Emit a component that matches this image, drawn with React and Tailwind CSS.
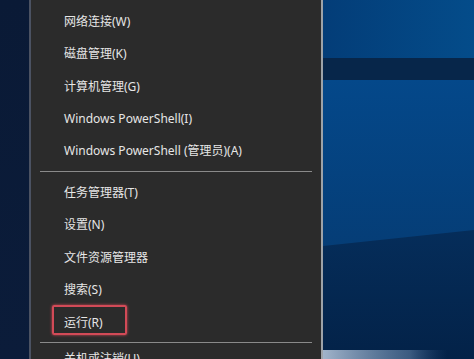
const groupA = [
  '网络连接(W)',
  '磁盘管理(K)',
  '计算机管理(G)',
  'Windows PowerShell(I)',
  'Windows PowerShell (管理员)(A)',
];

const groupB = ['任务管理器(T)', '设置(N)', '文件资源管理器', '搜索(S)'];

const Wallpaper = () => (
  <svg className="h-full w-full" viewBox="0 0 152 359" preserveAspectRatio="none">
    <defs>
      <linearGradient id="top" x1="0" y1="0" x2="1" y2="0">
        <stop offset="0" stopColor="#033d78" />
        <stop offset="1" stopColor="#044c8a" />
      </linearGradient>
      <linearGradient id="mid" x1="0" y1="0" x2="0" y2="1">
        <stop offset="0" stopColor="#04488a" />
        <stop offset="1" stopColor="#053d76" />
      </linearGradient>
      <linearGradient id="low" x1="0" y1="0" x2="0" y2="1">
        <stop offset="0" stopColor="#052d5a" />
        <stop offset="1" stopColor="#032248" />
      </linearGradient>
      <linearGradient id="glow" x1="0" y1="0" x2="1" y2="0">
        <stop offset="0" stopColor="#c9d8ea" stopOpacity="0.8" />
        <stop offset="0.7" stopColor="#7f9fc4" stopOpacity="0.45" />
        <stop offset="1" stopColor="#3d6595" stopOpacity="0" />
      </linearGradient>
    </defs>
    <rect x="0" y="0" width="152" height="60" fill="url(#top)" />
    <rect x="0" y="58" width="152" height="22" fill="#07264a" />
    <rect x="0" y="80" width="152" height="170" fill="url(#mid)" />
    <polygon points="0,246 152,230 152,359 0,359" fill="url(#low)" />
    <rect x="0" y="350" width="125" height="9" fill="url(#glow)" />
  </svg>
);

export default function App() {
  return (
    <div
      className="flex h-[359px] w-[474px] overflow-hidden bg-[#0b1a33]"
      style={{ fontFamily: '"Noto Sans", "Noto Sans CJK SC", sans-serif' }}
    >
      {/* Desktop strip left */}
      <div className="w-[29px] shrink-0 bg-gradient-to-b from-[#0a1a36] to-[#0b1c3a]" />

      {/* Win+X menu */}
      <div className="flex w-[294px] shrink-0 flex-col border-l-2 border-r-2 border-l-[#4b5262] border-r-[#9ea3a8] bg-[#2b2b2b] pl-[33px] pt-[6px] text-[12px] text-[#e6e6e6]">
        {groupA.map((t) => (
          <div key={t} className="flex h-[32.3px] shrink-0 items-center whitespace-nowrap">
            {t}
          </div>
        ))}
        <div className="-ml-[24px] mr-[9px] mt-[4px] h-px shrink-0 bg-[#8a8a8a]" />
        <div className="mt-[4px] shrink-0" />
        {groupB.map((t) => (
          <div key={t} className="flex h-[32.5px] shrink-0 items-center whitespace-nowrap">
            {t}
          </div>
        ))}
        <div className="relative flex h-[32.5px] shrink-0 items-center">
          <span className="absolute -left-[12px] top-[-1px] h-[30px] w-[75px] rounded-[2px] border-2 border-[#d24a57] shadow-[0_0_3px_#d24a57]" />
          运行(R)
        </div>
        <div className="-ml-[24px] mr-[9px] mt-[3px] h-px shrink-0 bg-[#8a8a8a]" />
        <div className="flex h-[32.5px] shrink-0 items-center whitespace-nowrap">关机或注销(U)</div>
      </div>

      {/* Desktop right */}
      <div className="flex-1">
        <Wallpaper />
      </div>
    </div>
  );
}
